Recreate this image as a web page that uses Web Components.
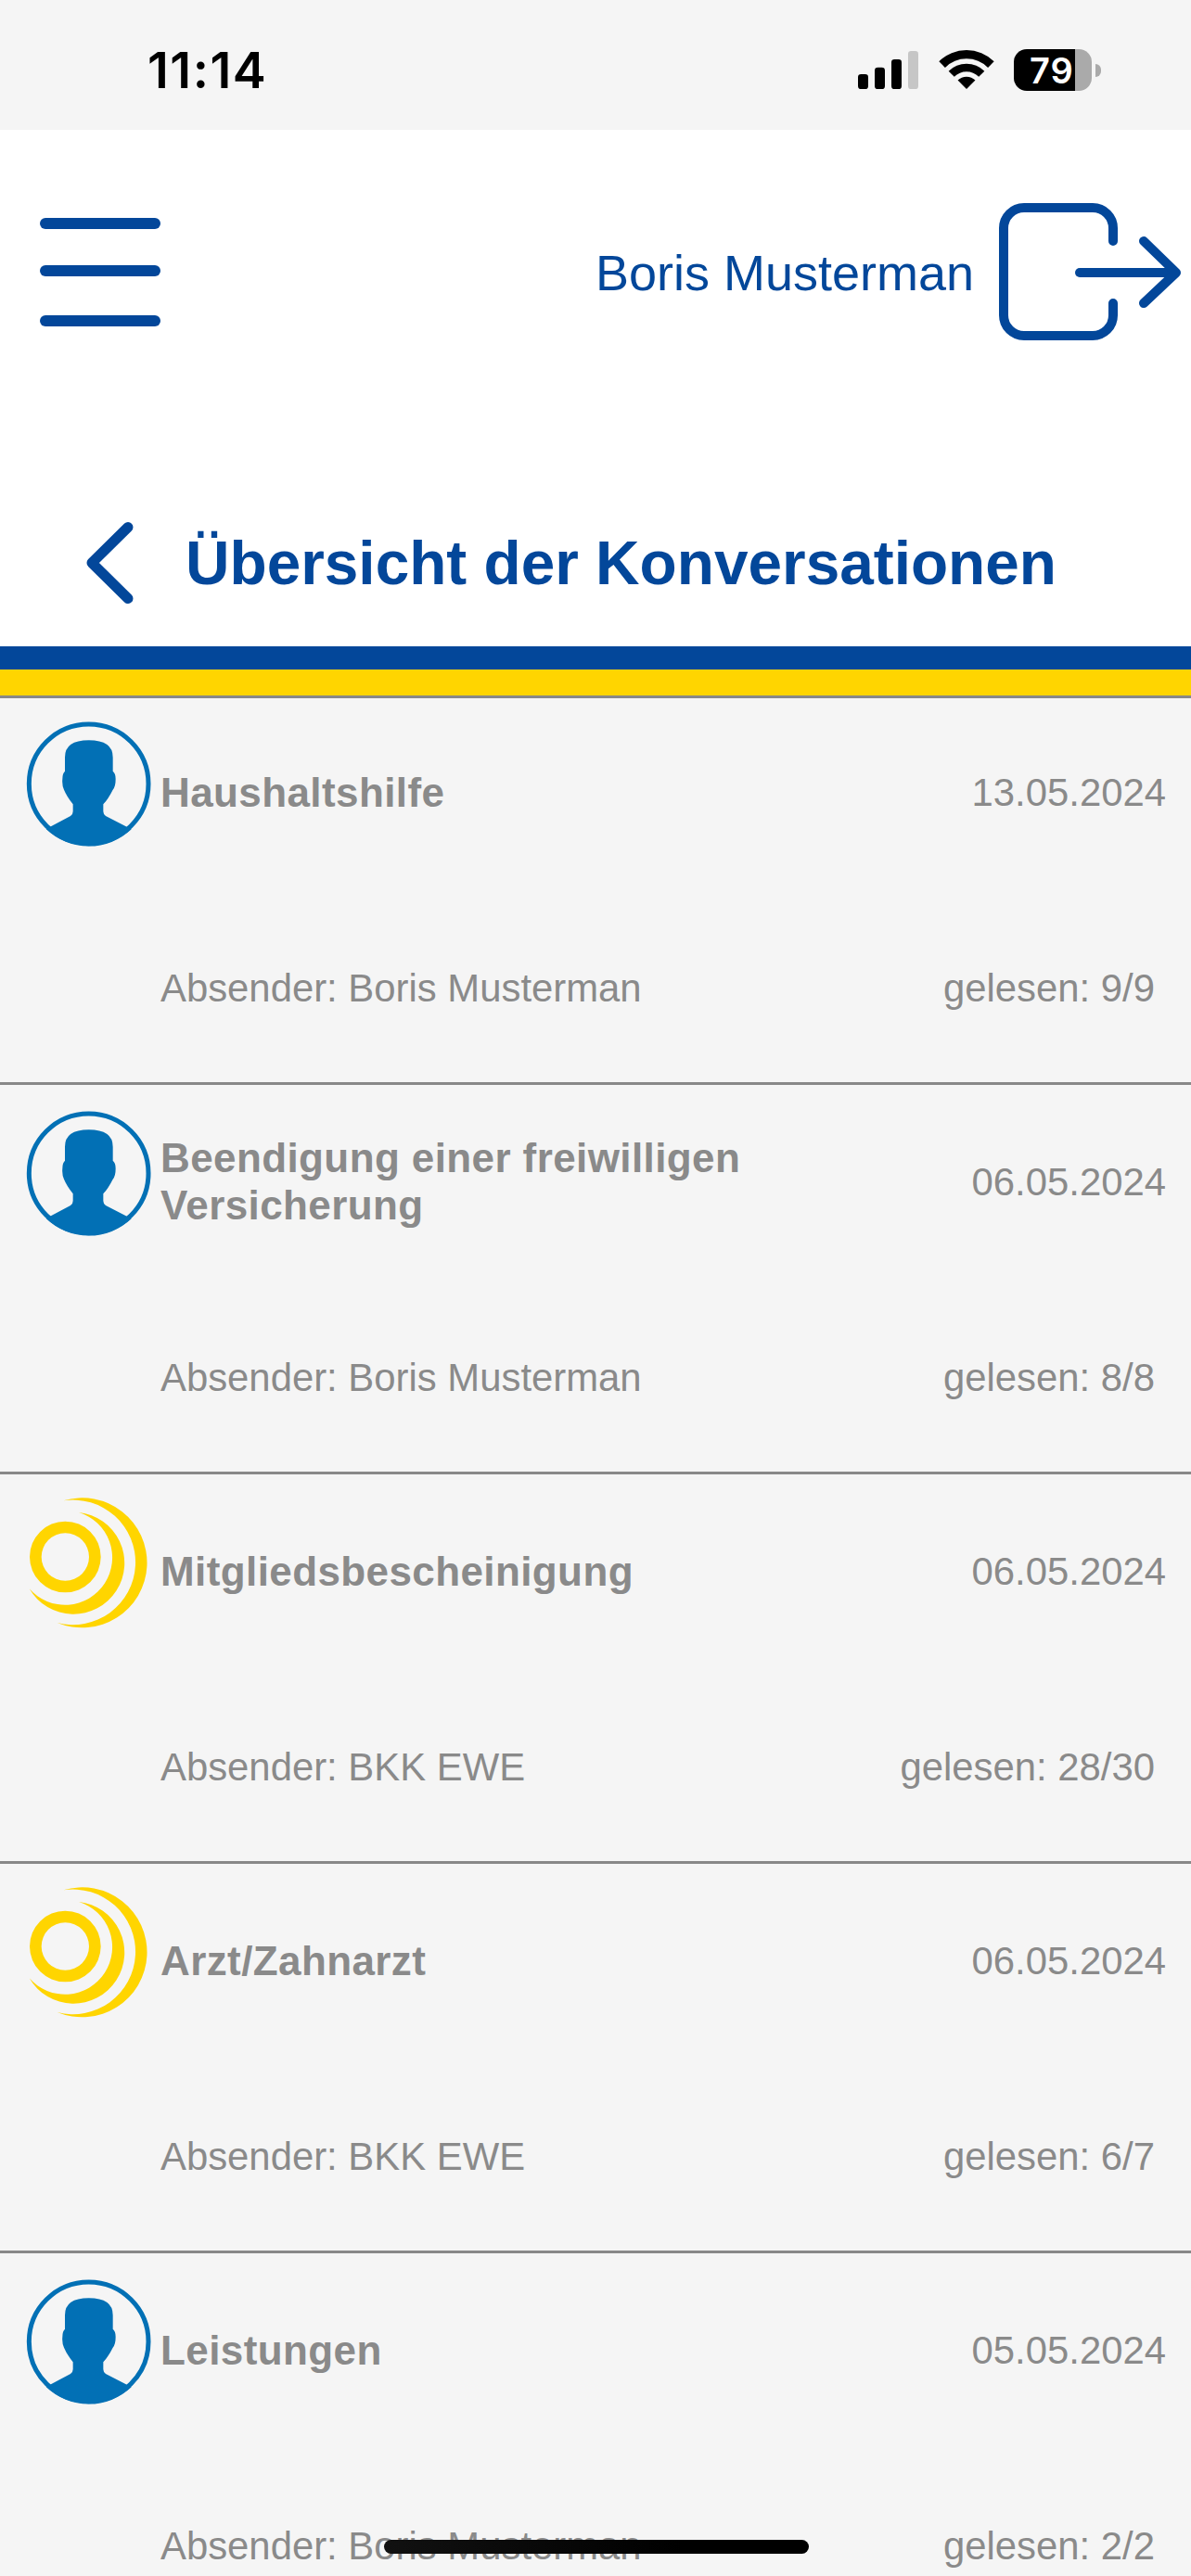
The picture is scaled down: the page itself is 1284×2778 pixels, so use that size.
<!DOCTYPE html>
<html lang="de">
<head>
<meta charset="utf-8">
<title>Übersicht der Konversationen</title>
<style>
  html, body { margin: 0; padding: 0; height: 2778px; overflow: hidden; background: #f5f5f5; }
  body { font-family: "Liberation Sans", Arial, sans-serif; }
</style>
</head>
<body>
<app-shell>
  <status-bar time="11:14" battery="79"></status-bar>
  <app-header name="Boris Musterman" heading="Übersicht der Konversationen"></app-header>
  <conversation-list>
    <conversation-row sender="user" date="13.05.2024" from="Boris Musterman" read="9/9">Haushaltshilfe</conversation-row>
    <conversation-row sender="user" date="06.05.2024" from="Boris Musterman" read="8/8">Beendigung einer freiwilligen Versicherung</conversation-row>
    <conversation-row sender="bkk" date="06.05.2024" from="BKK EWE" read="28/30">Mitgliedsbescheinigung</conversation-row>
    <conversation-row sender="bkk" date="06.05.2024" from="BKK EWE" read="6/7">Arzt/Zahnarzt</conversation-row>
    <conversation-row sender="user" date="05.05.2024" from="Boris Musterman" read="2/2">Leistungen</conversation-row>
  </conversation-list>
</app-shell>

<script>
class AppShell extends HTMLElement {
  constructor() {
    super();
    this.attachShadow({ mode: 'open' });
    this.shadowRoot.innerHTML = `
      <style>
        :host { display: block; position: relative; width: 1284px; height: 2778px; overflow: hidden; background: #f5f5f5; }
        .home { position: absolute; left: 414px; top: 2739px; width: 458px; height: 15px; border-radius: 8px; background: linear-gradient(90deg, #111, #000 70%); }
      </style>
      <slot></slot>
      <div class="home"></div>
    `;
  }
}

class StatusBar extends HTMLElement {
  constructor() {
    super();
    this.attachShadow({ mode: 'open' });
  }
  connectedCallback() {
    this.shadowRoot.innerHTML = `
      <style>
        :host { display: flex; align-items: flex-start; height: 140px; background: #f5f5f5; color: #000; font-family: Inter, "Liberation Sans", sans-serif; }
        .time { margin: 45px 0 0 159px; font-size: 54px; line-height: 62px; font-weight: 600; letter-spacing: 1.5px; }
        .icons { margin: 53px 0 0 auto; padding-right: 97px; display: flex; align-items: flex-start; }
        .signal { margin-top: 2px; width: 65px; height: 41px; }
        .wifi { margin-left: 23px; margin-top: 1px; width: 58px; height: 42px; overflow: visible; }
        .battery { margin-left: 22px; width: 84px; height: 45px; border-radius: 14px; background: linear-gradient(90deg, #000 0 79%, #aaa 79%); color: #fff; font-size: 38px; line-height: 47px; font-weight: 600; letter-spacing: 1px; box-sizing: border-box; padding-left: 17px; white-space: nowrap; }
        .nub { margin: 16px 0 0 4px; width: 6px; height: 14px; border-radius: 0 7px 7px 0; background: #aaa; }
      </style>
      <div class="time">${this.getAttribute('time')}</div>
      <div class="icons">
        <svg class="signal" viewBox="135 165 195 123">
          <rect x="135" y="240" width="33" height="48" rx="10"/>
          <rect x="189" y="218" width="33" height="70" rx="10"/>
          <rect x="243" y="192" width="33" height="96" rx="10"/>
          <rect x="297" y="165" width="33" height="123" rx="10" fill="#c6c6c6"/>
        </svg>
        <svg class="wifi" viewBox="398 162 174 126">
          <path d="M485 288L456.7 259.7A40 40 0 0 1 513.3 259.7Z"/>
          <path d="M427 230A82 82 0 0 1 543 230L524.6 248.4A56 56 0 0 0 445.4 248.4Z"/>
          <path d="M396 199A126 126 0 0 1 574 199L554.3 218.7A98 98 0 0 0 415.7 218.7Z"/>
        </svg>
        <div class="battery">${this.getAttribute('battery')}</div>
        <div class="nub"></div>
      </div>
    `;
  }
}

class AppHeader extends HTMLElement {
  constructor() {
    super();
    this.attachShadow({ mode: 'open' });
  }
  connectedCallback() {
    this.shadowRoot.innerHTML = `
      <style>
        :host { display: block; background: #fff; color: #03479a; }
        .top { display: flex; align-items: flex-start; height: 340px; }
        .menu { margin: 95px 0 0 43px; width: 130px; display: flex; flex-direction: column; gap: 39px; }
        .menu i { display: block; height: 12px; border-radius: 6px; background: #03479a; }
        .menu i:last-child { margin-top: 3px; }
        .user { margin-left: auto; display: flex; align-items: flex-start; }
        .name { margin-top: 75px; font-size: 54px; line-height: 158px; }
        .logout { margin: 79px 11px 0 27px; width: 196px; height: 149px; overflow: visible; }
        .title { display: flex; align-items: center; box-sizing: border-box; height: 217px; padding-top: 36px; }
        .back { margin: 0 0 0 90px; width: 56px; height: 90px; flex: none; }
        h1 { margin: 0 0 0 54px; font-size: 65.75px; font-weight: 700; line-height: 70px; white-space: nowrap; }
        .stripe-blue { height: 25px; background: #03479a; }
        .stripe-yellow { height: 28px; background: #ffd500; }
      </style>
      <div class="top">
        <div class="menu"><i></i><i></i><i></i></div>
        <div class="user">
          <div class="name">${this.getAttribute('name')}</div>
          <svg class="logout" viewBox="1077 219 196 149" fill="none" stroke="#03479a" stroke-width="10" stroke-linecap="round" stroke-linejoin="round">
            <path d="M1200 260V246A22 22 0 0 0 1178 224H1104A22 22 0 0 0 1082 246V340A22 22 0 0 0 1104 362H1178A22 22 0 0 0 1200 340V327"/>
            <path d="M1164 294H1266"/>
            <path d="M1233 260L1268 294L1233 327"/>
          </svg>
        </div>
      </div>
      <div class="title">
        <svg class="back" viewBox="90 561.5 56 90" fill="none" stroke="#03479a" stroke-width="11" stroke-linecap="round" stroke-linejoin="round">
          <path d="M138 568L99 606.5L138 645"/>
        </svg>
        <h1>${this.getAttribute('heading')}</h1>
      </div>
      <div class="stripe-blue"></div>
      <div class="stripe-yellow"></div>
    `;
  }
}

class ConversationList extends HTMLElement {
  constructor() {
    super();
    this.attachShadow({ mode: 'open' });
    this.shadowRoot.innerHTML = `
      <style>
        :host { display: block; border-top: 3px solid #888; }
        ::slotted(:first-child) { margin-top: -3px; }
      </style>
      <slot></slot>
    `;
  }
}

const AVATARS = {
  user: `<svg viewBox="0 660 519 519">
      <circle cx="287" cy="946" r="193" fill="none" stroke="#0270b5" stroke-width="15"/>
      <path fill="#0270b5" d="M149 1092L228 1050Q236 1045 236 1035V1012Q215 985 207 965Q200 950 202 930Q202 912 210 905V860Q210 805 287 805Q365 805 365 860V905Q374 912 374 930Q374 955 365 965Q350 995 334 1012V1035Q334 1045 342 1050L425 1093A200 200 0 0 1 149 1092Z"/>
    </svg>`,
  bkk: `<svg viewBox="0 30 519 519" fill="#ffd500">
      <path d="M205 115A210 210 0 1 1 185 510A202 202 0 1 0 205 115Z"/>
      <path d="M255 153A165 165 0 1 1 95 400A153 153 0 1 0 255 153Z"/>
      <path fill-rule="evenodd" d="M96 297a115 115 0 1 0 230 0a115 115 0 1 0 -230 0ZM134 297a77 77 0 1 1 154 0a77 77 0 1 1 -154 0Z"/>
    </svg>`
};

class ConversationRow extends HTMLElement {
  constructor() {
    super();
    this.attachShadow({ mode: 'open' });
  }
  connectedCallback() {
    const kind = this.getAttribute('sender');
    this.shadowRoot.innerHTML = `
      <style>
        :host { display: grid; grid-template-columns: 173px 1fr auto; grid-template-rows: 210px 1fr; box-sizing: border-box; height: 420px; border-bottom: 3px solid #888; color: #8a8a8a; }
        .icon { grid-row: 1 / span 2; }
        .icon svg { display: block; width: 173px; height: 173px; }
        .subject { align-self: center; margin-top: -2px; font-size: 44px; line-height: 51px; font-weight: 700; letter-spacing: 0.4px; width: 680px; }
        .date { grid-column: 3; align-self: center; font-size: 41.85px; padding-right: 27px; text-align: right; }
        .from { grid-column: 2; font-size: 41.85px; line-height: 50px; margin-top: 81px; }
        .read { grid-column: 3; font-size: 41.85px; line-height: 50px; margin-top: 81px; padding-right: 39px; text-align: right; }
      </style>
      <div class="icon">${AVATARS[kind]}</div>
      <div class="subject"><slot></slot></div>
      <div class="date">${this.getAttribute('date')}</div>
      <div class="from">Absender: ${this.getAttribute('from')}</div>
      <div class="read">gelesen: ${this.getAttribute('read')}</div>
    `;
  }
}

customElements.define('app-shell', AppShell);
customElements.define('status-bar', StatusBar);
customElements.define('app-header', AppHeader);
customElements.define('conversation-list', ConversationList);
customElements.define('conversation-row', ConversationRow);
</script>
</body>
</html>
